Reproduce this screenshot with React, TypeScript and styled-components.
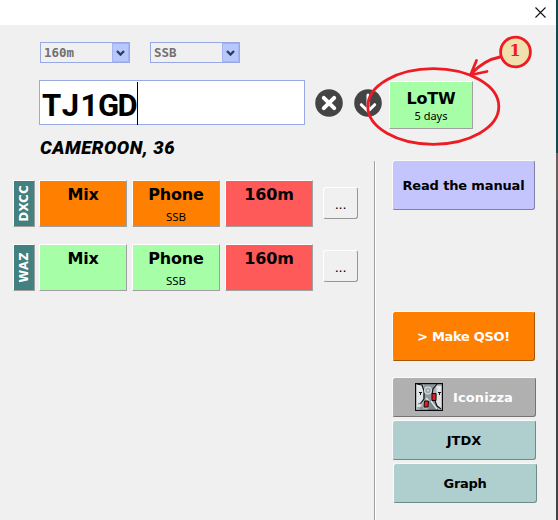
import React from "react";
import styled, { createGlobalStyle } from "styled-components";

const GlobalStyle = createGlobalStyle`
  * { box-sizing: border-box; }
  body { margin: 0; background: #f0f0f0; overflow: hidden; }
`;

const verdana = `"DejaVu Sans", Verdana, sans-serif`;
const tahoma = `"Noto Sans", Tahoma, sans-serif`;

const Screen = styled.div`
  position: relative;
  display: flex;
  width: 558px;
  height: 520px;
  overflow: hidden;
`;

const Window = styled.main`
  display: flex;
  flex-direction: column;
  width: 556px;
  height: 520px;
  background: #f0f0f0;
`;

const Desktop = styled.div`
  width: 2px;
  height: 520px;
  background: linear-gradient(#12494b 0 153px, #66605f 153px 200px, #555 200px 360px, #414545 360px);
`;

const TitleBar = styled.header`
  display: flex;
  justify-content: flex-end;
  flex: 0 0 25px;
  padding: 7px 10px 0 0;
  background: #fff;
`;

const Filters = styled.div`
  display: flex;
  gap: 20px;
  flex: 0 0 21px;
  margin: 17px 0 0 40px;
`;

const Combo = styled.div`
  display: flex;
  justify-content: space-between;
  width: 90px;
  height: 21px;
  border: 1px solid #98a9e4;
  padding-left: 3px;
  color: #707070;
  font: bold 12.5px/20px "DejaVu Sans Mono", monospace;
`;

const Drop = styled.span`
  display: grid;
  place-items: center;
  width: 17px;
  height: 19px;
  background: #b8c8fd;
  border: 1px solid #a5b6f3;
  border-top-color: #9eafe9;
`;

const CallRow = styled.div`
  display: flex;
  height: 49px;
  flex: 0 0 49px;
  margin: 17px 0 0 39px;
`;

const CallField = styled.div`
  display: flex;
  width: 266px;
  height: 45px;
  background: #fff;
  border: 1px solid #98a9e4;
  padding: 1px 0 0 2px;
  font: 700 31px/47px Roboto, sans-serif;
  color: #000;
`;

const CallText = styled.span`
  display: flex;
  width: 95px;
`;

const CallChar = styled.span`
  flex: 0 0 19px;
  min-width: 0;
  display: flex;
  justify-content: center;
`;

const Caret = styled.span`
  width: 1px;
  height: 43px;
  background: #000;
`;

const RoundButton = styled.span<{ $left: number }>`
  width: 28px;
  height: 28px;
  margin: 9px 0 0 ${(p) => p.$left}px;
`;

const Cell = styled.div<{ $bg: string; $width?: number; $height?: number; $top?: number }>`
  display: flex;
  flex-direction: column;
  align-items: center;
  width: ${(p) => p.$width ?? 88}px;
  height: ${(p) => p.$height ?? 47}px;
  background: ${(p) => p.$bg};
  border: 1px solid;
  border-color: #fff #a0a0a0 #a0a0a0 #fff;
  padding-top: ${(p) => p.$top ?? 4}px;
  color: #000;
`;

const LotwSlot = styled.div`
  margin: 1px 0 0 7px;
`;

const CellTitle = styled.strong`
  font: bold 16px/19px ${verdana};
  letter-spacing: -0.2px;
`;

const CellNote = styled.span<{ $gap: number; $size: number }>`
  margin-top: ${(p) => p.$gap}px;
  font: ${(p) => p.$size}px/15px ${tahoma};
`;

const Entity = styled.div`
  flex: 0 0 24px;
  margin: 7px 0 0 40px;
  font: italic 900 18.5px/24px Roboto, sans-serif;
  letter-spacing: 0.5px;
  color: #000;
`;

const Body = styled.div`
  display: flex;
  flex: 1;
`;

const Awards = styled.section`
  display: flex;
  flex-direction: column;
  flex: 0 0 374px;
  gap: 17px;
  padding: 20px 0 0 13px;
`;

const AwardRow = styled.div`
  display: flex;
  height: 47px;
`;

const Cells = styled.div`
  display: flex;
  gap: 5px;
  margin-left: 4px;
`;

const AwardName = styled.div`
  display: grid;
  place-items: center;
  width: 22px;
  height: 47px;
  background: #438080;
  border: 1px solid;
  border-color: #fff #a0a0a0 #a0a0a0 #fff;
`;

const AwardText = styled.span`
  writing-mode: vertical-rl;
  transform: rotate(180deg);
  color: #fff;
  font: bold 11.5px/14px ${verdana};
  letter-spacing: 0.4px;
  padding-top: 1px;
`;

const MoreButton = styled.div<{ $top: number }>`
  width: 35px;
  height: 32px;
  margin: ${(p) => p.$top}px 0 0 10px;
  border: 1px solid;
  border-color: #fff #969696 #969696 #fff;
  border-radius: 3px;
  text-align: center;
  font: 13px/34px ${verdana};
  letter-spacing: -0.3px;
`;

const Divider = styled.div`
  flex: 0 0 2px;
  margin-top: 1px;
  background: linear-gradient(90deg, #a0a0a0 50%, #fff 50%);
`;

const Actions = styled.aside`
  display: flex;
  flex-direction: column;
  padding-left: 16px;
`;

const ActionButton = styled.div<{
  $bg: string; $edge: string; $height: number; $top?: number; $width?: number; $light?: boolean; $left?: number;
}>`
  display: flex;
  align-items: center;
  justify-content: center;
  gap: 10px;
  width: ${(p) => p.$width ?? 143}px;
  height: ${(p) => p.$height}px;
  margin: ${(p) => p.$top ?? 0}px 0 0 ${(p) => p.$left ?? 0}px;
  background: ${(p) => p.$bg};
  border: 1px solid;
  border-color: #fafafa ${(p) => p.$edge} ${(p) => p.$edge} #fafafa;
  border-radius: 3px;
  color: ${(p) => (p.$light ? "#fff" : "#000")};
  font: bold 13px/18px ${verdana};
  white-space: nowrap;
`;

const Label = styled.span<{ $track: number }>`
  letter-spacing: ${(p) => p.$track}px;
  padding-top: 2px;
`;

const Annotation = styled.svg`
  position: absolute;
  left: 0;
  top: 0;
`;

const Chevron = () => (
  <svg width="9" height="8" viewBox="0 0 9 8">
    <path d="M1 2 4.5 5.5 8 2" fill="none" stroke="#313c56" strokeWidth="2.3" />
  </svg>
);

const CloseIcon = () => (
  <svg width="11" height="11" viewBox="0 0 11 11">
    <path d="M.5.5l10 10M10.5.5l-10 10" stroke="#111" strokeWidth="1.1" />
  </svg>
);

const ClearIcon = () => (
  <svg width="28" height="28" viewBox="0 0 28 28">
    <circle cx="14" cy="14" r="13.8" fill="#444" />
    <path d="M8.8 8.8l10.4 10.4M19.2 8.8L8.8 19.2" stroke="#fff" strokeWidth="4" strokeLinecap="round" />
  </svg>
);

const DownIcon = () => (
  <svg width="28" height="28" viewBox="0 0 28 28">
    <circle cx="14" cy="14" r="13.8" fill="#444" />
    <path d="M14 6v16M7.3 15.7l6.7 6.6 6.7-6.6" fill="none" stroke="#fff" strokeWidth="3" strokeLinecap="round" strokeLinejoin="round" />
  </svg>
);

const RobotIcon = () => (
  <svg width="28" height="28" viewBox="0 0 28 28">
    <rect width="28" height="28" fill="#090909" />
    <path d="M1 1h26v26H1z" fill="#aab3b8" />
    <path d="M1 1h6l2 7-1 9-4 10H1z" fill="#e2e5e7" />
    <path d="M9 1h11l-3 8 1 8-5 2-4-5z" fill="#8d989f" />
    <path d="M21 3h6v24h-3l-4-9 2-6z" fill="#dfe3e5" />
    <path d="M14 19l4-2 6 10H13z" fill="#7c888e" />
    <path d="M2 1l5 1 2 6 0 8-4 5M22 1l-4 5-1 5M20 18l2 5 4 3" fill="none" stroke="#111" strokeWidth="1.2" />
    <path d="M24.5 3v9M16 18l6 8M11 15l3 3" stroke="#e9eced" strokeWidth="1.3" />
    <circle cx="13" cy="7.5" r="3.4" fill="#9da8ae" stroke="#d5dbde" strokeWidth="1.2" />
    <circle cx="13" cy="7.5" r="1" fill="#dce1e3" />
    <path d="M4 9h3v1H6v2H5v-2H4zM23 9h3v1h-1v2h-1v-2h-1z" fill="#111" />
    <path d="M17 10.5h4v7h-4z" fill="#e31d2b" stroke="#150707" />
    <path d="M9.5 18h4l-.5 6H9z" fill="#e31d2b" stroke="#150707" />
    <path d="M3 21l4-1M2 25h6" stroke="#626e74" />
    <rect x=".5" y=".5" width="27" height="27" fill="none" stroke="#090909" strokeWidth="1.4" />
  </svg>
);

const orange = "#ff8000";
const green = "#a6ffa6";
const red = "#ff5a5a";

const awards = [
  { name: "DXCC", mode: orange, more: 7 },
  { name: "WAZ", mode: green, more: 6 },
];

export default function App() {
  return (
    <>
      <GlobalStyle />
      <Screen>
        <Window>
          <TitleBar><CloseIcon /></TitleBar>
          <Filters>
            <Combo>160m<Drop><Chevron /></Drop></Combo>
            <Combo>SSB<Drop><Chevron /></Drop></Combo>
          </Filters>
          <CallRow>
            <CallField>
              <CallText>
                {"TJ1GD".split("").map((c) => <CallChar key={c}>{c}</CallChar>)}
              </CallText>
              <Caret />
            </CallField>
            <RoundButton $left={10}><ClearIcon /></RoundButton>
            <RoundButton $left={11}><DownIcon /></RoundButton>
            <LotwSlot>
              <Cell $bg={green} $width={84} $height={48} $top={7}>
                <CellTitle>LoTW</CellTitle>
                <CellNote $gap={0} $size={11}>5 days</CellNote>
              </Cell>
            </LotwSlot>
          </CallRow>
          <Entity>CAMEROON, 36</Entity>
          <Body>
            <Awards>
              {awards.map((a) => (
                <AwardRow key={a.name}>
                  <AwardName><AwardText>{a.name}</AwardText></AwardName>
                  <Cells>
                    <Cell $bg={a.mode}><CellTitle>Mix</CellTitle></Cell>
                    <Cell $bg={a.mode}><CellTitle>Phone</CellTitle><CellNote $gap={5} $size={11.5}>SSB</CellNote></Cell>
                    <Cell $bg={red}><CellTitle>160m</CellTitle></Cell>
                  </Cells>
                  <MoreButton $top={a.more}>...</MoreButton>
                </AwardRow>
              ))}
            </Awards>
            <Divider />
            <Actions>
              <ActionButton $bg="#c5c5fd" $edge="#8080ae" $height={50}><Label $track={-0.15}>Read the manual</Label></ActionButton>
              <ActionButton $bg={orange} $edge="#a85500" $height={50} $top={101} $light><Label $track={-0.3}>&gt; Make QSO!</Label></ActionButton>
              <ActionButton $bg="#b0b0b0" $edge="#747474" $height={40} $top={16} $width={144} $light>
                <RobotIcon /><Label $track={0.1}>Iconizza</Label>
              </ActionButton>
              <ActionButton $bg="#afcece" $edge="#708989" $height={40} $top={3} $width={144}><Label $track={0}>JTDX</Label></ActionButton>
              <ActionButton $bg="#afcece" $edge="#708989" $height={40} $top={3} $left={1} $width={144}><Label $track={-0.3}>Graph</Label></ActionButton>
            </Actions>
          </Body>
        </Window>
        <Desktop />
        <Annotation width="558" height="520" viewBox="0 0 558 520" fill="none" stroke="#ed1c24">
          <ellipse cx="433.3" cy="106.5" rx="65.5" ry="37.8" strokeWidth="2.8" />
          <path d="M500 57Q484 60 471 74M476.5 60.5 470.5 75 487 71.5" strokeWidth="2.8" strokeLinecap="round" strokeLinejoin="round" />
          <circle cx="515.5" cy="52" r="14.9" fill="#efe0ae" strokeWidth="2.8" />
          <text x="515" y="56" textAnchor="middle" fill="#ed1c24" stroke="none" fontFamily="DejaVu Serif, serif" fontSize="16" fontWeight="bold">1</text>
        </Annotation>
      </Screen>
    </>
  );
}
